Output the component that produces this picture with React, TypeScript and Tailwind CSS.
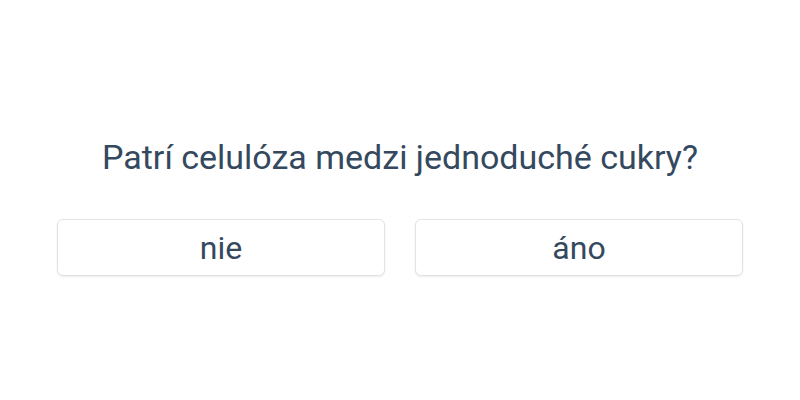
export default function App() {
  return (
    <div className="flex h-[400px] w-[800px] flex-col items-center bg-white pt-[134px] text-[#34495e]" style={{ fontFamily: "Roboto, 'Noto Sans', sans-serif" }}>
      <h1 className="text-[34px] leading-[46px]">Patrí celulóza medzi jednoduché cukry?</h1>
      <div className="mt-[39px] grid w-full grid-cols-2 gap-[30px] px-[57px]">
        <button className="h-[57px] rounded-md border border-[#e3e3e3] bg-white text-[32px] text-[#34495e] shadow-[0_1px_2px_rgba(0,0,0,0.08)]">
          nie
        </button>
        <button className="h-[57px] rounded-md border border-[#e3e3e3] bg-white text-[32px] text-[#34495e] shadow-[0_1px_2px_rgba(0,0,0,0.08)]">
          áno
        </button>
      </div>
    </div>
  )
}
